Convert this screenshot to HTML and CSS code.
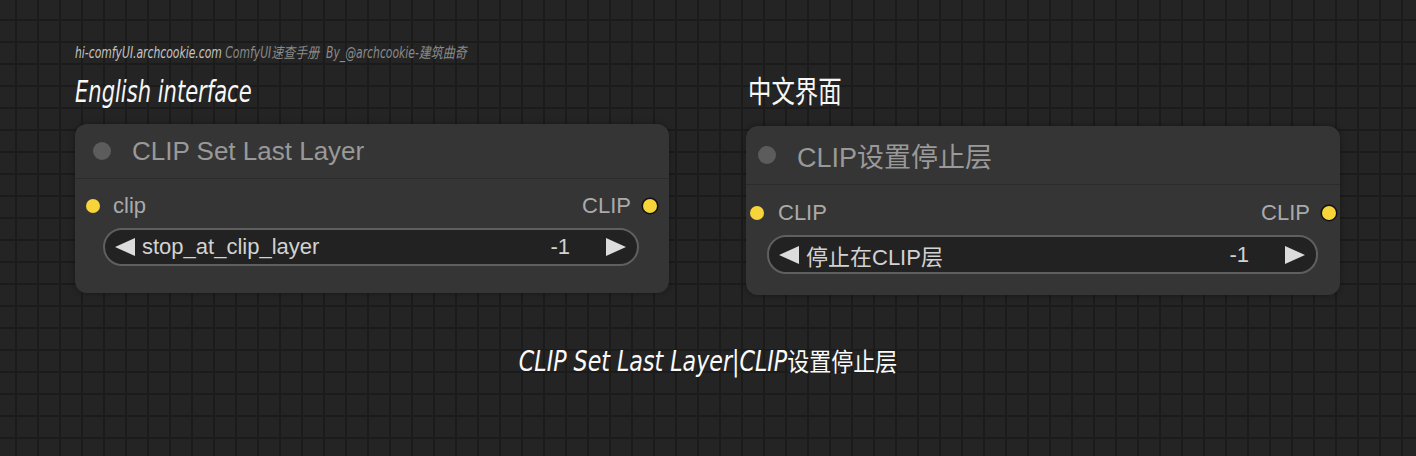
FILE: index.html
```html
<!DOCTYPE html>
<html lang="zh">
<head>
  <meta charset="UTF-8">
  <meta name="viewport" content="width=device-width, initial-scale=1.0">
  <title>CLIP Set Last Layer</title>
  <link rel="stylesheet" href="styles.css">
</head>
<body>
  <div class="page">
    <p class="credit"><span class="narrow"><span class="credit-site">hi-comfyUI.archcookie.com</span> <span class="credit-note">ComfyUI速查手册&nbsp; By_@archcookie-建筑曲奇</span></span></p>

    <div class="columns">
      <section class="col">
        <h2 class="col-title"><span class="narrow">English interface</span></h2>
        <div class="node">
          <div class="node-title">
            <span class="title-dot"></span>
            <span class="title-text">CLIP Set Last Layer</span>
          </div>
          <div class="node-body">
            <div class="slot-row">
              <div class="slot slot-in"><span class="slot-dot"></span><span>clip</span></div>
              <div class="slot slot-out"><span>CLIP</span><span class="slot-dot slot-dot-out"></span></div>
            </div>
            <div class="widget">
              <svg class="arrow" viewBox="0 0 20 18"><polygon points="20,0 20,18 0,9" /></svg>
              <span class="widget-name">stop_at_clip_layer</span>
              <span class="widget-value">-1</span>
              <svg class="arrow" viewBox="0 0 20 18"><polygon points="0,0 0,18 20,9" /></svg>
            </div>
          </div>
        </div>
      </section>

      <section class="col">
        <h2 class="col-title"><span class="cjk-head">中文界面</span></h2>
        <div class="node node-cn">
          <div class="node-title">
            <span class="title-dot"></span>
            <span class="title-text">CLIP设置停止层</span>
          </div>
          <div class="node-body">
            <div class="slot-row">
              <div class="slot slot-in"><span class="slot-dot"></span><span>CLIP</span></div>
              <div class="slot slot-out"><span>CLIP</span><span class="slot-dot slot-dot-out"></span></div>
            </div>
            <div class="widget">
              <svg class="arrow" viewBox="0 0 20 18"><polygon points="20,0 20,18 0,9" /></svg>
              <span class="widget-name">停止在CLIP层</span>
              <span class="widget-value">-1</span>
              <svg class="arrow" viewBox="0 0 20 18"><polygon points="0,0 0,18 20,9" /></svg>
            </div>
          </div>
        </div>
      </section>
    </div>

    <p class="caption"><span class="caption-text">CLIP Set Last Layer|CLIP<span class="caption-cjk">设置停止层</span></span></p>
  </div>
</body>
</html>
```

FILE: styles.css
```css
* {
  margin: 0;
  padding: 0;
  box-sizing: border-box;
}

body {
  width: 1416px;
  height: 456px;
  overflow: hidden;
  background-color: #242424;
  background-image:
    linear-gradient(#1b1b1b 2px, transparent 2px),
    linear-gradient(90deg, #1b1b1b 2px, transparent 2px);
  background-size: 22px 22px;
  background-position: 15px 19px;
  font-family: "Liberation Sans", Arial, "Noto Sans CJK SC", sans-serif;
  color: #ddd;
}

.page {
  padding-top: 44px;
}

/* handwritten-style labels, squeezed to a condensed look */
.credit,
.col-title,
.caption {
  font-family: "DejaVu Sans Condensed", "Noto Sans CJK SC", sans-serif;
  font-style: italic;
  font-weight: 400;
  white-space: nowrap;
}

.narrow {
  display: inline-block;
  transform-origin: left center;
}

.credit {
  padding-left: 75px;
  font-size: 15px;
  line-height: 18px;
}

.credit .narrow {
  transform: scaleX(0.8);
}

.credit-site {
  color: #c4c4c4;
}

.credit-note {
  color: #8a8a8a;
}

.columns {
  display: flex;
  gap: 77px;
  padding-left: 75px;
  margin-top: 12px;
}

.col {
  width: 594px;
}

.col-title {
  font-size: 30px;
  line-height: 36px;
  color: #f7f7f7;
}

.col-title .narrow {
  transform: scaleX(0.78);
}

.cjk-head {
  display: inline-block;
  font-style: normal;
  transform: scaleX(0.78);
  transform-origin: left center;
  margin-left: 2px;
}

/* ComfyUI node */
.node {
  margin-top: 14px;
  background: #353535;
  border-radius: 12px;
  box-shadow: 0 0 6px rgba(0, 0, 0, 0.35);
}

.node-title {
  display: flex;
  align-items: center;
  gap: 21px;
  height: 55px;
  padding-left: 18px;
  border-bottom: 1px solid #2b2b2b;
}

.title-dot {
  width: 18px;
  height: 18px;
  border-radius: 50%;
  background: #5c5c5c;
}

.title-text {
  font-size: 26px;
  color: #999;
}

.node-body {
  padding: 15px 12px 27px 11px;
}

.slot-row {
  display: flex;
  justify-content: space-between;
  align-items: center;
  height: 24px;
  font-size: 22px;
  color: #aaa;
}

.slot {
  display: flex;
  align-items: center;
}

.slot-in {
  gap: 13px;
}

.slot-out {
  gap: 12px;
}

.slot-dot {
  width: 14px;
  height: 14px;
  border-radius: 50%;
  background: #f7d43a;
}

.slot-dot-out {
  box-shadow: 0 0 0 1.5px #111;
}

.widget {
  display: flex;
  align-items: center;
  height: 38px;
  margin: 10px 18px 0 17px;
  padding: 0 11px 0 10px;
  background: #222;
  border: 2px solid #5f5f5f;
  border-radius: 19px;
  font-size: 22px;
  color: #d2d2d2;
}

.arrow {
  width: 20px;
  height: 18px;
  fill: #dcdcdc;
  flex-shrink: 0;
}

.widget-name {
  margin-left: 7px;
  flex: 1;
}

.widget-value {
  margin-right: 36px;
}

/* Chinese version is a slightly different crop */
.node-cn {
  margin-top: 16px;
}

.node-cn .node-title {
  height: 59px;
  padding-left: 12px;
}

.node-cn .title-text {
  font-size: 27px;
}

.node-cn .node-body {
  padding: 16px 4px 21px 4px;
}

.node-cn .slot-in {
  gap: 14px;
}

.node-cn .widget {
  height: 39px;
}

.caption {
  margin-top: 50px;
  text-align: center;
  font-size: 28px;
  line-height: 34px;
  color: #fafafa;
}

.caption-text {
  display: inline-block;
  transform: scaleX(0.88);
}

.caption-cjk {
  font-size: 25px;
  font-style: normal;
}
```
